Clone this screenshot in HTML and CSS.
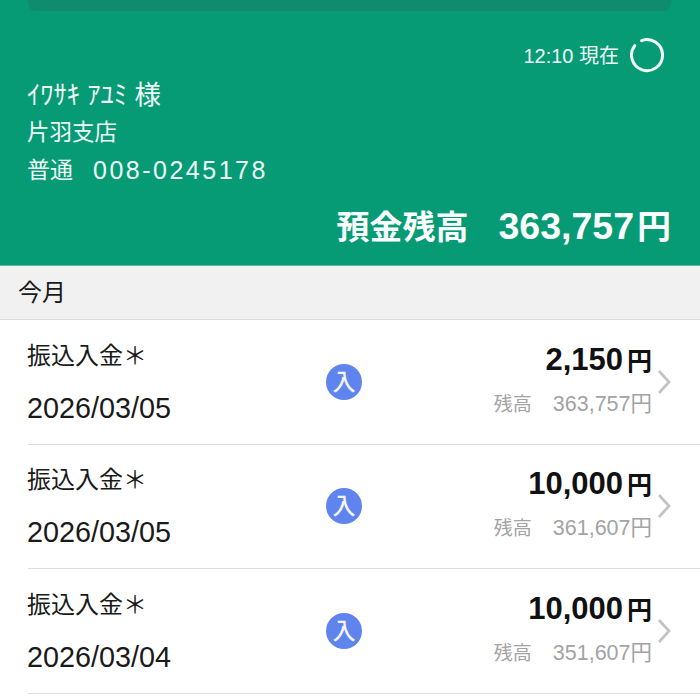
FILE: index.html
```html
<!DOCTYPE html>
<html lang="ja">
<head>
<meta charset="utf-8">
<title>入出金明細</title>
<link rel="stylesheet" href="styles.css">
</head>
<body>
<div class="page">
  <header class="hero">
    <div class="notice"></div>
    <div class="status">
      <span class="status-text">12:10 現在</span>
      <svg class="refresh" width="36" height="36" viewBox="0 0 36 36" fill="none"><path d="M12.600 3.600A15.500 15.500 0 1 1 5.800 8.600" stroke="#f2fbf8" stroke-width="3" stroke-linecap="round"/></svg>
    </div>
    <div class="account">
      <div class="holder">ｲﾜｻｷ ｱﾕﾐ 様</div>
      <div class="branch">片羽支店</div>
      <div class="number"><span>普通</span><span class="digits">008-0245178</span></div>
    </div>
    <div class="balance"><span>預金残高</span><span class="balance-value">363,757<span class="yen">円</span></span></div>
  </header>
  <div class="month">今月</div>
  <ul class="list">
    <li class="row">
      <div class="left"><div class="title">振込入金＊</div><div class="date">2026/03/05</div></div>
      <div class="badge">入</div>
      <div class="right"><div class="amount">2,150<span class="yen-small">円</span></div><div class="rest"><span class="rest-label">残高</span><span>363,757円</span></div></div>
      <svg class="chev" width="16" height="26" viewBox="0 0 16 26" fill="none"><path d="M3 2l10 11L3 24" stroke="#c4c4c6" stroke-width="2.800"/></svg>
    </li>
    <li class="row">
      <div class="left"><div class="title">振込入金＊</div><div class="date">2026/03/05</div></div>
      <div class="badge">入</div>
      <div class="right"><div class="amount">10,000<span class="yen-small">円</span></div><div class="rest"><span class="rest-label">残高</span><span>361,607円</span></div></div>
      <svg class="chev" width="16" height="26" viewBox="0 0 16 26" fill="none"><path d="M3 2l10 11L3 24" stroke="#c4c4c6" stroke-width="2.800"/></svg>
    </li>
    <li class="row">
      <div class="left"><div class="title">振込入金＊</div><div class="date">2026/03/04</div></div>
      <div class="badge">入</div>
      <div class="right"><div class="amount">10,000<span class="yen-small">円</span></div><div class="rest"><span class="rest-label">残高</span><span>351,607円</span></div></div>
      <svg class="chev" width="16" height="26" viewBox="0 0 16 26" fill="none"><path d="M3 2l10 11L3 24" stroke="#c4c4c6" stroke-width="2.800"/></svg>
    </li>
  </ul>
</div>
</body>
</html>
```
FILE: styles.css
```css
* { box-sizing: border-box; }
html, body { margin: 0; padding: 0; }
body {
  width: 700px; height: 700px; overflow: hidden; background: #fff;
  font-family: "Liberation Sans", "Noto Sans CJK JP", sans-serif; color: #1a1a1a;
}
.page { display: flex; flex-direction: column; }
.hero {
  height: 266px; background: #069b75; color: #eef9f5;
  padding: 0 29px 0 27px; display: flex; flex-direction: column;
  border-bottom: 1px solid #5fb79f;
}
.notice { height: 11px; background: #0f8c70; border-radius: 0 0 8px 8px; flex: none; margin-left: 1px; }
.status { display: flex; justify-content: flex-end; align-items: center; gap: 10px; margin-top: 26px; height: 36px; margin-right: 6px; }
.status-text { font-size: 20px; position: relative; top: -1px; }
.account { margin-top: 3px; display: flex; flex-direction: column; }
.holder { font-size: 26.500px; line-height: 38px; height: 38px; }
.branch { font-size: 22.500px; line-height: 38px; height: 38px; }
.number { font-size: 23px; line-height: 37px; display: flex; gap: 20px; }
.digits { font-size: 25px; letter-spacing: 2.500px; }
.balance { display: flex; justify-content: flex-end; align-items: baseline; gap: 30px; font-size: 33px; font-weight: 700; line-height: 44px; margin-top: 15px; color: #fbfefd; }
.balance-value { font-size: 37.500px; }
.yen { font-size: 34px; margin-left: 3px; }
.month { height: 54px; background: #f1f1f1; border-bottom: 1px solid #dcdcdc; font-size: 24px; line-height: 53px; padding-left: 18px; }
.list { list-style: none; margin: 0; padding: 0 0 0 28px; }
.row { height: 124.500px; border-bottom: 1px solid #dedede; display: flex; align-items: center; position: relative; }
.left { width: 298px; flex: none; margin-left: -1px; margin-right: 1px; }
.title { font-size: 24px; line-height: 32px; }
.date { font-size: 28.800px; line-height: 32px; margin-top: 20px; }
.badge { width: 36px; height: 36px; border-radius: 50%; background: #5f84ee; color: #f3f6ff; font-size: 23px; font-weight: 500; line-height: 36px; text-align: center; flex: none; }
.right { margin-left: auto; margin-right: 48px; display: flex; flex-direction: column; align-items: flex-end; }
.amount { font-size: 31px; font-weight: 700; line-height: 34px; color: #111; margin-top: -2px; }
.yen-small { font-size: 25px; margin-left: 4px; }
.rest { display: flex; align-items: baseline; gap: 21px; font-size: 21.500px; line-height: 28px; margin-top: 12px; color: #a3a3a3; }
.rest-label { font-size: 19px; }
.chev { position: absolute; right: 28px; top: 50%; margin-top: -13px; }
```
